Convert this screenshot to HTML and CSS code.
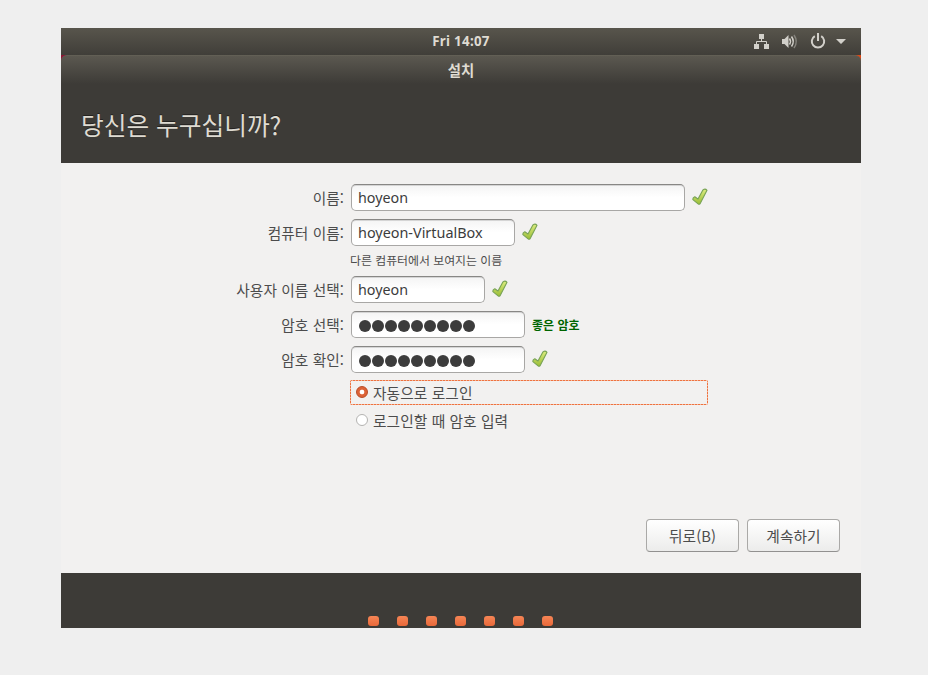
FILE: index.html
```html
<!DOCTYPE html>
<html lang="ko">
<head>
<meta charset="utf-8">
<title>설치</title>
<link rel="stylesheet" href="styles.css">
</head>
<body>
<svg class="defs" width="0" height="0" aria-hidden="true">
  <defs>
    <linearGradient id="leaf" x1="0" y1="0" x2="0" y2="1"><stop offset="0" stop-color="#dcec80"/><stop offset="1" stop-color="#9abd35"/></linearGradient>
    <symbol id="check" viewBox="0 0 16 18"><path d="M12.2 1.2 Q13.8 .8 15 2.3 L8.2 15.5 Q7.500 16.900 6.100 15.900 L.9 11.600 Q.5 9.900 2.800 8.800 L6 11 L10.900 2 Z" fill="url(#leaf)" stroke="#78a355" stroke-width="1.1" stroke-linejoin="round"/></symbol>
  </defs>
</svg>
<main class="screen">
  <header class="panel">
    <span class="clock">Fri 14:07</span>
    <div class="indicators">
      <svg width="92" height="18" viewBox="0 0 92 18" fill="#d2d0ca">
        <path d="M5 2h5v5H5zM0 12h5v5H0zM10 12h5v5h-5z"/>
        <path d="M7.5 7v3M2.5 12V9.5h10V12" fill="none" stroke="#d2d0ca"/>
        <path d="M28 7h2.5L34.5 3v13L30.5 12H28z"/>
        <path d="M35.5 6.5q2 3 0 6M37.500 4.500q3.500 5 0 10" fill="none" stroke="#d2d0ca" stroke-width="1.5"/>
        <path d="M40 3q4.500 6.500 0 13" fill="none" stroke="#85837c" stroke-width="1.5"/>
        <path d="M60.800 4.100a6.200 6.200 0 1 0 6.400 0" fill="none" stroke="#d2d0ca" stroke-width="2"/>
        <path d="M63 1h2v8h-2zM82 7h10l-5 5z"/>
      </svg>
    </div>
  </header>
  <div class="under"><div class="titlebar">설치</div></div>
  <div class="heading"><h1>당신은 누구십니까?</h1></div>
  <section class="content">
    <div class="row"><span class="label">이름:</span><div class="field name">hoyeon</div><svg class="tick"><use href="#check"/></svg></div>
    <div class="row"><span class="label">컴퓨터 이름:</span><div class="field host">hoyeon-VirtualBox</div><svg class="tick"><use href="#check"/></svg></div>
    <div class="hint">다른 컴퓨터에서 보여지는 이름</div>
    <div class="row"><span class="label">사용자 이름 선택:</span><div class="field user">hoyeon</div><svg class="tick"><use href="#check"/></svg></div>
    <div class="row"><span class="label">암호 선택:</span><div class="field secret"><i></i><i></i><i></i><i></i><i></i><i></i><i></i><i></i><i></i></div><span class="strength">좋은 암호</span></div>
    <div class="row"><span class="label">암호 확인:</span><div class="field secret"><i></i><i></i><i></i><i></i><i></i><i></i><i></i><i></i><i></i></div><svg class="tick"><use href="#check"/></svg></div>
    <div class="option focused"><span class="radio on"></span><span class="option-text">자동으로 로그인</span></div>
    <div class="option"><span class="radio"></span><span class="option-text">로그인할 때 암호 입력</span></div>
    <div class="actions"><div class="button">뒤로(B)</div><div class="button">계속하기</div></div>
  </section>
  <footer class="progress"><i></i><i></i><i></i><i></i><i></i><i></i><i></i></footer>
</main>
</body>
</html>
```
FILE: styles.css
```css
* { box-sizing: border-box; }
body {
  margin: 0;
  height: 675px;
  overflow: hidden;
  background: #efefef;
  color: #4c4c4c;
  font: 14.7px/20px "Noto Sans CJK KR", sans-serif;
}
.defs { position: absolute; }
.screen { width: 800px; height: 600px; margin: 28px 0 0 61px; background: #f2f1f0; display: flex; flex-direction: column; }
.panel {
  height: 27px;
  padding-bottom: 2px;
  display: grid;
  grid-template-columns: 1fr auto 1fr;
  align-items: center;
  background: linear-gradient(#58554c, #403e39);
  color: #dfdbd2;
}
.clock { grid-column: 2; font: bold 13.3px/20px "Noto Sans", sans-serif; letter-spacing: .3px; }
.indicators { justify-self: end; height: 18px; margin-right: 15px; }
.indicators svg { display: block; }
.under { height: 29px; background: linear-gradient(90deg, #8c1434 50%, #dd4814 50%); }
.titlebar {
  height: 29px;
  border-top: 1px solid #625f55;
  border-radius: 6px 6px 0 0;
  background: linear-gradient(#5b5850, #3d3b37);
  color: #dfdbd2;
  text-align: center;
  font-weight: bold;
  font-size: 14.4px;
  line-height: 28px;
}
.heading { height: 79px; padding: 21px 20px 0; background: #3d3b37; color: #dfdbd2; }
h1 { margin: 0; font-size: 24.7px; line-height: 38px; font-weight: 400; text-shadow: 0 -1px #24221f; white-space: nowrap; }
.content { height: 410px; padding-top: 21px; display: flex; flex-direction: column; }
.row { height: 35px; display: flex; align-items: flex-start; }
.label { width: 283px; margin-right: 7px; text-align: right; line-height: 28px; white-space: nowrap; letter-spacing: .08px; }
.low { line-height: 30px; }
.field {
  height: 27px;
  padding: 0 6px;
  border: 1px solid #a8a7a5;
  border-top-color: #888785;
  border-radius: 5px;
  background: linear-gradient(#f4f4f4, #fff 50%);
  box-shadow: inset 0 1px #d5d5d5;
  color: #3c3c3c;
  font: 14.3px/26px "Noto Sans", sans-serif;
  white-space: nowrap;
}
.name { width: 334px; }
.host { width: 164px; font-size: 14.4px; }
.user { width: 134px; }
.secret { width: 174px; display: flex; align-items: center; gap: 1px; padding: 3px 7px 0; }
.secret i { width: 12px; height: 12px; border-radius: 50%; background: #3c3c3c; }
.tick { width: 16px; height: 18px; margin: 4px 0 0 7px; }
.strength { margin-left: 7px; color: #006400; font-size: 12px; font-weight: bold; line-height: 28px; }
.hint { height: 22px; margin: 0 0 0 289px; font-size: 11.9px; line-height: 12px; }
.option { display: flex; align-items: center; width: 358px; height: 25px; margin-left: 289px; padding-left: 6px; }
.option + .option { margin-top: 3px; }
.row + .focused {
  margin-top: -1px;
  border-radius: 2px;
  background:
    repeating-linear-gradient(90deg, #ee7340 0 2px, #f4b79d 2px 3px) top / 100% 1px no-repeat,
    repeating-linear-gradient(90deg, #ee7340 0 2px, #f4b79d 2px 3px) bottom / 100% 1px no-repeat,
    repeating-linear-gradient(#ee7340 0 2px, #f4b79d 2px 3px) left / 1px 100% no-repeat,
    repeating-linear-gradient(#ee7340 0 2px, #f4b79d 2px 3px) right / 1px 100% no-repeat;
}
.radio { width: 12px; height: 12px; margin: -1px 5px 0 0; border: 1px solid #b4b3b1; border-radius: 50%; background: #fff; }
.on { border-color: #b84b25; background: radial-gradient(circle, #fff 0 2px, #dd6337 2.7px); }
.option-text { line-height: 25px; letter-spacing: .1px; }
.actions { display: flex; gap: 8px; margin: auto 21px 21px auto; }
.button {
  width: 93px;
  height: 33px;
  border: 1px solid #aaa9a7;
  border-bottom-color: #929190;
  border-radius: 4px;
  background: linear-gradient(#fff, #ececeb);
  text-align: center;
  line-height: 32px;
  letter-spacing: .1px;
}
.progress { height: 55px; padding-top: 43px; display: flex; gap: 18px; padding-left: 307px; background: #3d3b37; }
.progress i { width: 11px; height: 10px; border-radius: 3px; background: linear-gradient(#f68555, #e9693a); }
```
